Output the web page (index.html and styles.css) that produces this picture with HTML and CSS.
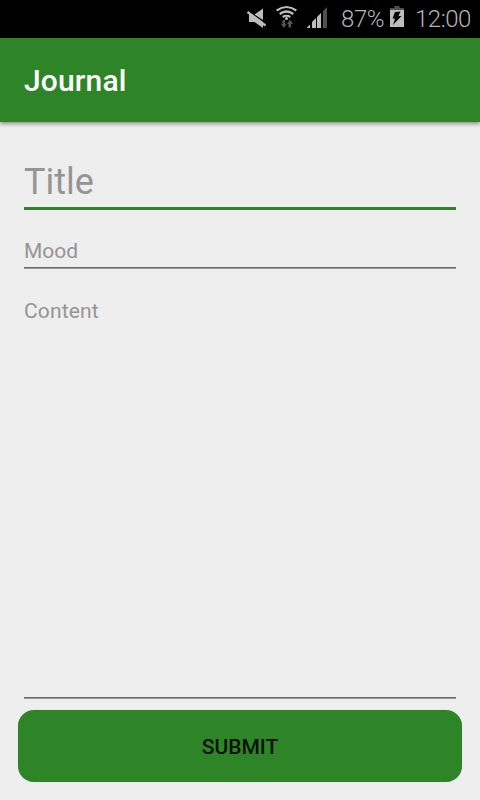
FILE: index.html
```html
<!DOCTYPE html>
<html lang="en">
<head>
<meta charset="utf-8">
<title>Journal</title>
<link rel="stylesheet" href="styles.css">
</head>
<body>
<div class="status">
  <svg class="icons" width="90" height="38" viewBox="242 0 90 38">
    <path fill="#bdbdbd" d="M254.500 14.500l8.500-6v11.500z"/>
    <path fill="#bdbdbd" d="M249 14h3l11 8v6l-8.500-6h-5.500z"/>
    <path stroke="#bdbdbd" stroke-width="2.200" d="M247.500 12l18 13.500"/>
    <g fill="none" stroke="#bdbdbd" stroke-width="2.200"><path d="M276.700 10.500q9.800-7 19.600 0M279.700 14q6.800-5 13.600 0M282.700 17q3.800-2.500 7.600 0"/></g>
    <circle cx="286.500" cy="18.500" r="1.500" fill="#bdbdbd"/>
    <path fill="#555" d="M282.500 20h2.500v4h1.500l-2.500 4-3-4h1.500zM288.500 27.500h2.500v-3.500h2l-3-4.500-3 4.500h1.500z"/>
    <path fill="#bdbdbd" d="M306.500 28l3.500-3.500v3.500zM312 28v-6l4-4v10zM317 28v-11l4-4v15z"/>
    <path fill="#505050" d="M323 28v-17l4-4v21z"/>
  </svg>
  <span class="percent">87%</span>
  <svg class="battery" width="14" height="38" viewBox="390 0 14 38">
    <path fill="#505050" d="M394.500 6h5v2h4.500v2h-14v-2h4.500z"/>
    <path fill="#bdbdbd" d="M390 10h14v17h-14z"/>
    <path fill="#000" d="M395 12l5.500-.5-2 4.500h3l-8.500 9 2-6.500h-2.500z"/>
  </svg>
  <span class="clock">12:00</span>
</div>
<header class="bar"><h1>Journal</h1></header>
<main class="form">
  <div class="field title">Title</div>
  <div class="field mood">Mood</div>
  <div class="field content">Content</div>
  <button class="submit">SUBMIT</button>
</main>
</body>
</html>
```
FILE: styles.css
```css
* { box-sizing: border-box; }
body { margin: 0; height: 800px; display: flex; flex-direction: column; background: #eee; font-family: Roboto, sans-serif; overflow: hidden; }
.status { height: 38px; flex: none; background: #000; color: #b4b4b4; display: flex; justify-content: flex-end; padding-right: 8px; font-size: 24px; font-weight: 350; line-height: 38px; }
.status svg { flex: none; }
.percent { width: 43px; margin: 0 6px 0 9px; letter-spacing: -.4px; }
.clock { width: 57px; margin-left: 11px; letter-spacing: -.5px; }
.bar { height: 84px; flex: none; background: #2e8528; padding: 0 24px; box-shadow: 0 2px 4px rgba(0,0,0,.4); }
h1 { margin: 0; color: #fff; font-size: 30px; font-weight: 500; line-height: 85px; letter-spacing: .15px; }
.form { flex: 1; display: flex; flex-direction: column; padding: 36px 18px 18px; }
.field { margin: 0 6px; color: #959595; font-size: 21px; line-height: 25px; }
.title { height: 52px; font-size: 36px; line-height: 48px; border-bottom: 3px solid #2e8528; }
.mood, .content { border-bottom: 1px solid #6c6c6c; box-shadow: 0 1px #979797; }
.mood { height: 29px; margin-top: 29px; }
.content { height: 399px; margin-top: 31px; letter-spacing: .15px; }
.submit { height: 72px; margin-top: 12px; border: 0; border-radius: 16px; background: #2e8528; color: #061105; font: 500 21px/72px Roboto, sans-serif; padding: 1px 0 0; box-shadow: 0 0 1px rgba(0,0,0,.2); }
```
